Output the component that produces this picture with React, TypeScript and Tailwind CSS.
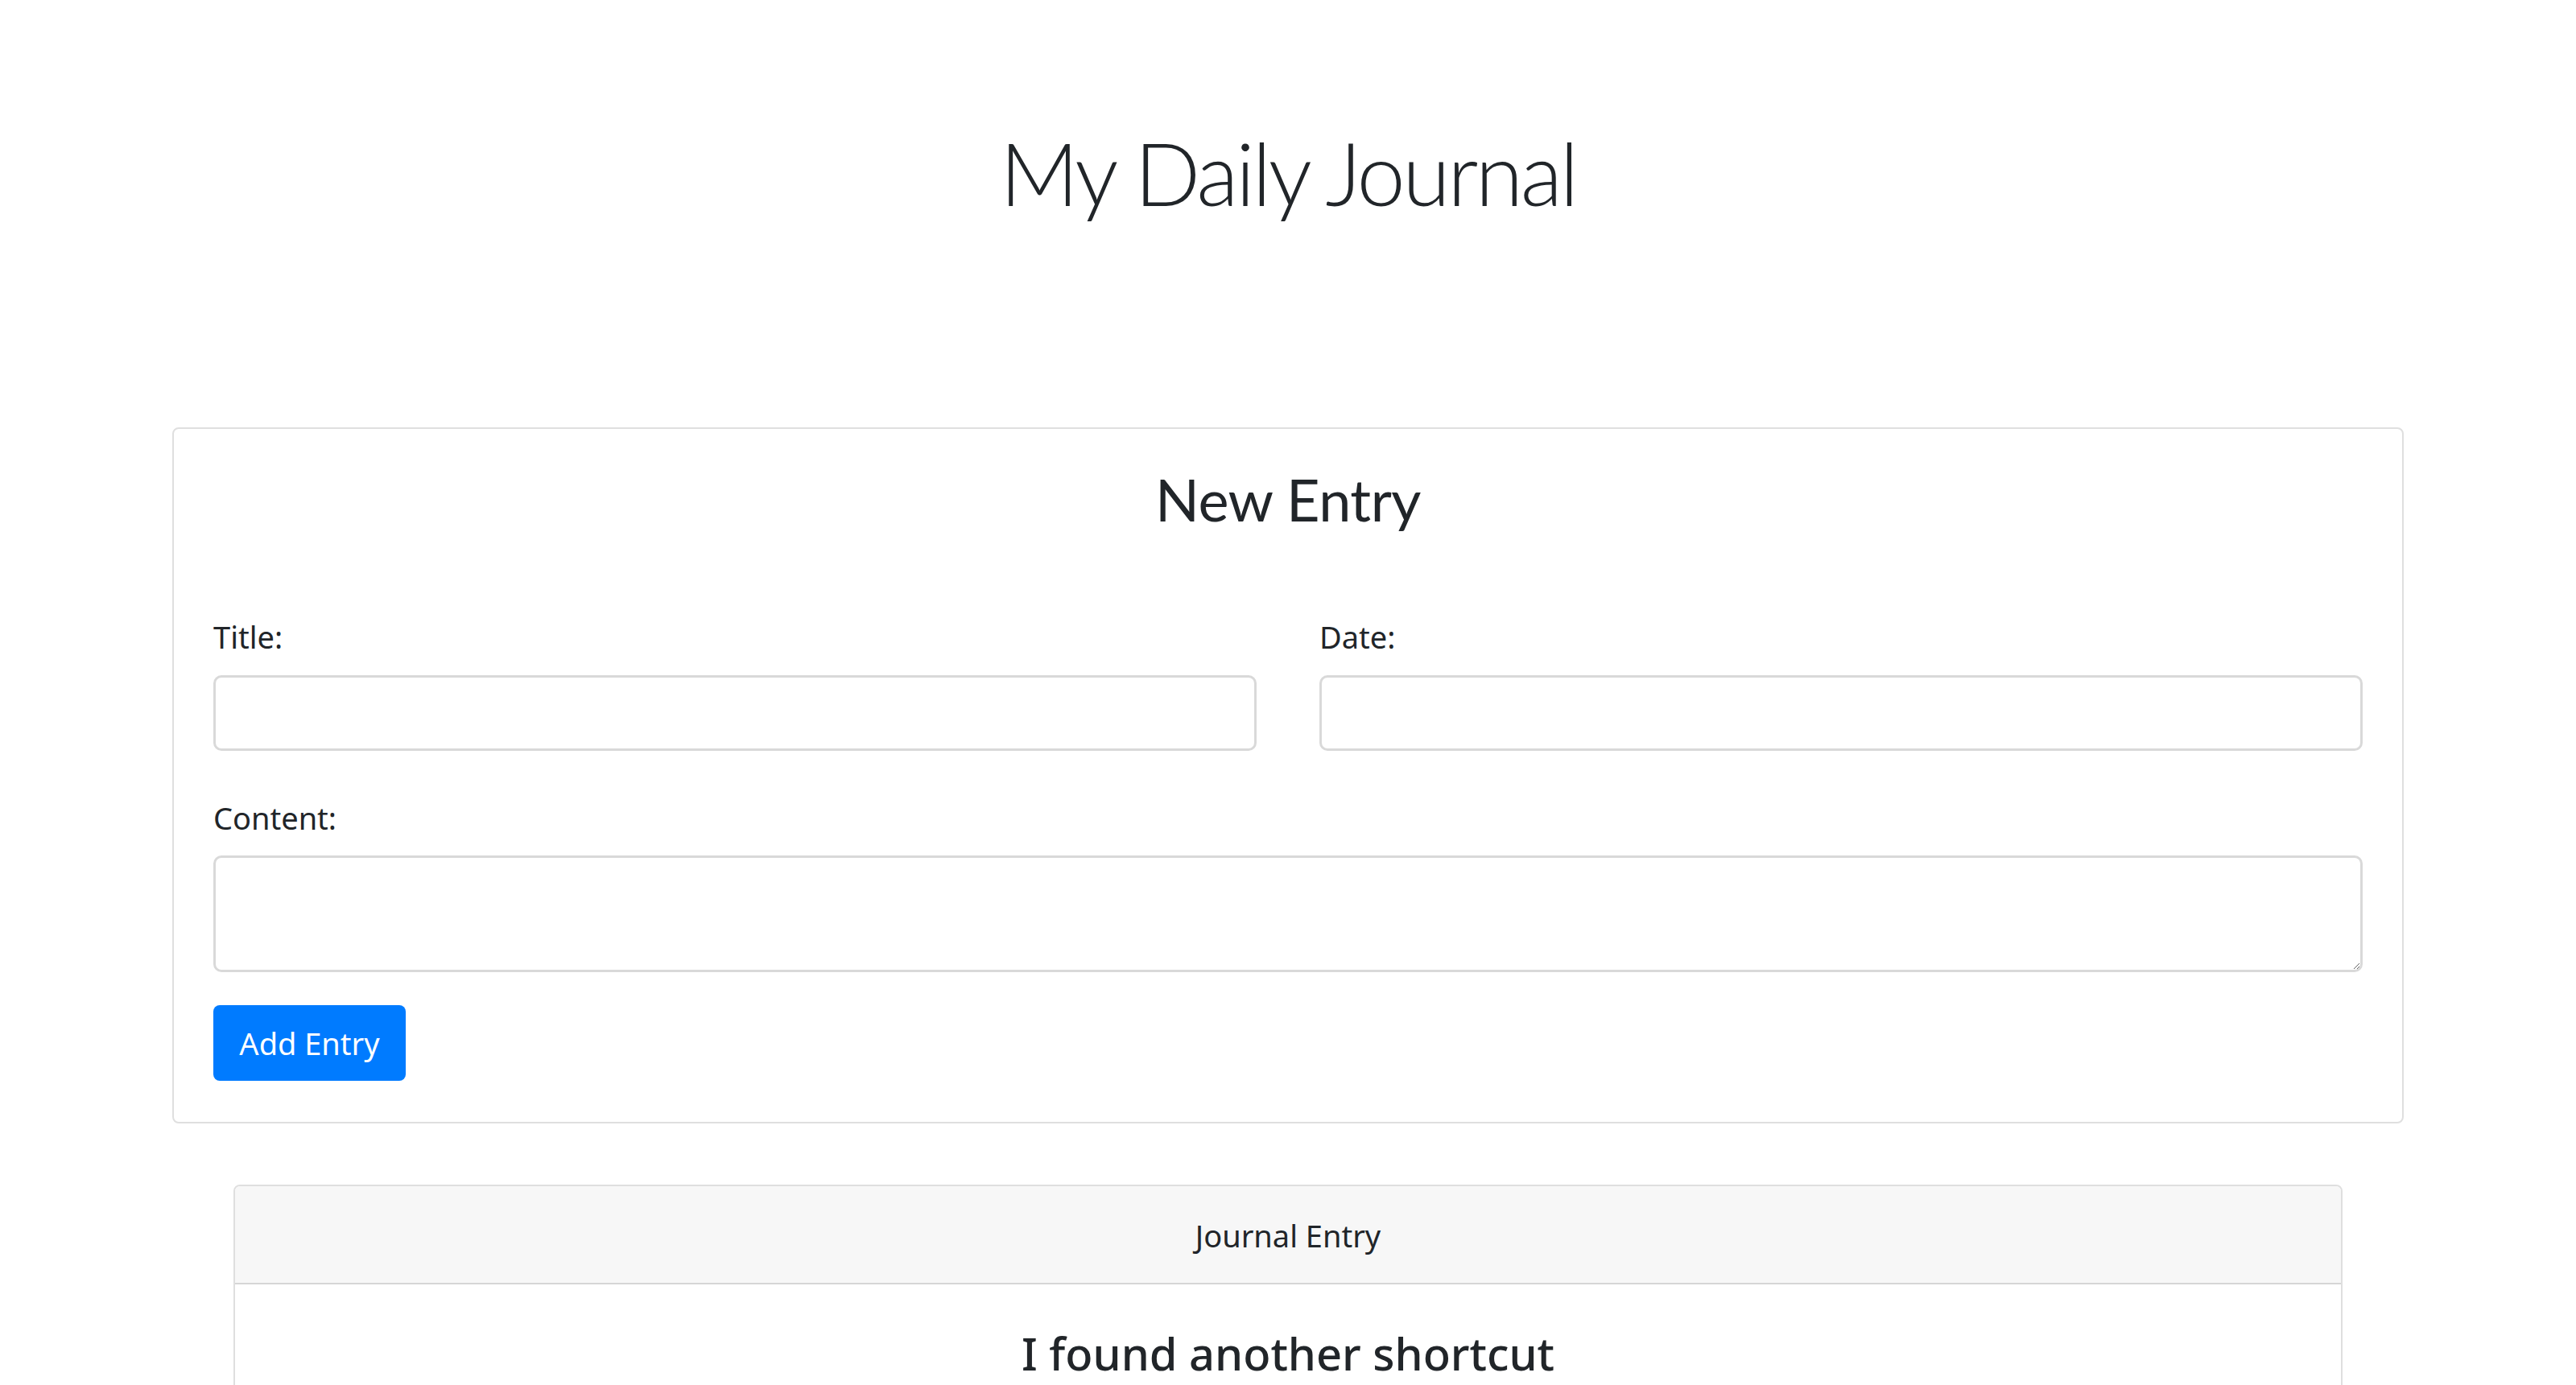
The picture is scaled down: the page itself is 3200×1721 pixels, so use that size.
const sans = "font-['Noto_Sans','Segoe_UI',sans-serif]";

function Field({ label, tall = false }: { label: string; tall?: boolean }) {
  return (
    <div className="flex flex-1 flex-col">
      <label className={`${sans} text-[38px] leading-[57px] text-[#212529]`}>{label}</label>
      {tall ? (
        <textarea className="mt-[18px] h-[145px] w-full resize-y rounded-[10px] border-[3px] border-[#d9d9d9] bg-white" />
      ) : (
        <input className="mt-[19px] h-[94px] w-full rounded-[10px] border-[3px] border-[#d9d9d9] bg-white" />
      )}
    </div>
  );
}

export default function App() {
  return (
    <div className="min-h-screen bg-white pb-20 text-[#212529]">
      <h1 className="pt-[149px] text-center font-['Lato',sans-serif] text-[108px] font-light leading-[130px] tracking-[-3.5px]">
        My Daily Journal
      </h1>

      <section className="mx-[214px] mt-[252px] rounded-[8px] border-2 border-[#dfdfdf] px-[49px] pt-[43px] pb-[51px]">
        <h2 className="text-center font-['Lato',sans-serif] text-[72px] leading-[88px] tracking-[-0.5px]">New Entry</h2>
        <div className="mt-[99px] flex gap-[78px]">
          <Field label="Title:" />
          <Field label="Date:" />
        </div>
        <div className="mt-[55px]">
          <Field label="Content:" tall />
        </div>
        <button
          className={`${sans} mt-[41px] h-[94px] w-[239px] rounded-[8px] bg-[#007bff] text-[38px] text-white`}
        >
          Add Entry
        </button>
      </section>

      <section className="mx-[290px] mt-[76px] overflow-hidden rounded-[8px] border-2 border-[#dfdfdf]">
        <div className={`${sans} h-[122px] border-b-2 border-[#d6d6d6] bg-[#f7f7f7] pt-[33px] text-center text-[38px] leading-[57px]`}>
          Journal Entry
        </div>
        <div className="px-[49px] pt-[52px] pb-[60px] text-center">
          <h3 className={`${sans} text-[56px] font-medium leading-[67px]`}>I found another shortcut</h3>
          <p className={`${sans} mt-[30px] text-[38px] leading-[57px]`}>
            Cutting through the park saves ten minutes on the walk to work.
          </p>
        </div>
      </section>
    </div>
  );
}
